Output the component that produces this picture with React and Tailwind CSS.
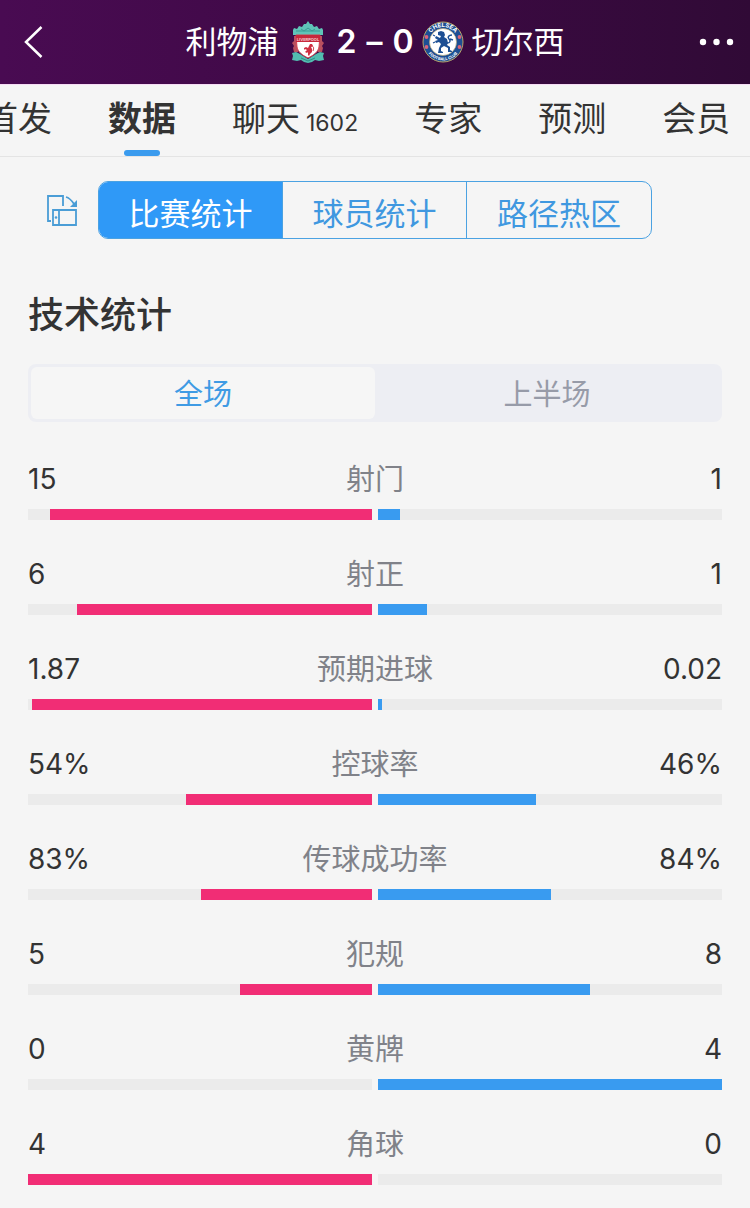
import React, { useState } from 'react'

const tabs = [
  { name: '首发' },
  { name: '数据' },
  { name: '聊天', count: 1602 },
  { name: '专家' },
  { name: '预测' },
  { name: '会员' },
]

const views = ['比赛统计', '球员统计', '路径热区']

const periods = ['全场', '上半场']

const stats = [
  { label: '射门', home: '15', away: '1' },
  { label: '射正', home: '6', away: '1' },
  { label: '预期进球', home: '1.87', away: '0.02' },
  { label: '控球率', home: '54%', away: '46%' },
  { label: '传球成功率', home: '83%', away: '84%' },
  { label: '犯规', home: '5', away: '8' },
  { label: '黄牌', home: '0', away: '4' },
  { label: '角球', home: '4', away: '0' },
]

function LiverpoolBadge() {
  return (
    <svg className="h-[42px] w-8" viewBox="0 0 32 42" role="img" aria-label="Liverpool">
      {/* gates */}
      <path d="M1 14V9l1-2 3 1 2-3 3 1 2-3 2 0 2-3 2 3 2 0 2 3 3-1 2 3 3-1 1 2v5z" fill="#5fc4b8" />
      <path d="M4 10h24M9 8l3 2 4-3 4 3 3-2" fill="none" stroke="#3b9d95" strokeWidth="1" />
      {/* flames */}
      <path d="M2 15h4v16H2l-1-4 1-2-2-3 2-2zM30 15h-4v16h4l1-4-1-2 2-3-2-2z" fill="#b9505f" />
      <path d="M0 32l4-1 4 2 8 5 8-5 4-2 4 1-1 3 1 4-5 1-4-1-3 2-4 1-4-1-3-2-4 1-5-1 1-4z" fill="#52bcb0" />
      <path d="M9 37l7 3 7-3" fill="none" stroke="#2f8d87" strokeWidth="1" />
      {/* shield */}
      <path d="M4 14h24l-1 12c-1 5-5 8-11 11C10 34 6 31 5 26z" fill="#fff" stroke="#d7414f" strokeWidth="1" />
      <path d="M4 14h24v7H4z" fill="#c8283c" />
      <text x="16" y="20" fill="#f3c9cd" fontSize="4" fontWeight="700" fontFamily="Inter, sans-serif" textAnchor="middle">
        LIVERPOOL
      </text>
      <path d="M18 23l2 0 1 2-2 1 1 2 0 3-2 2-1 2-1-1 0-3-1 1-2-1 2-2-2-1-1 1 0-2 2-1 2 1 1-2z" fill="#cf2f42" />
      <path d="M19 25c3 0 3 2 2 5" fill="none" stroke="#cf2f42" strokeWidth="1" />
    </svg>
  )
}

function ChelseaBadge() {
  return (
    <svg className="size-[42px]" viewBox="0 0 42 42" role="img" aria-label="Chelsea">
      <circle cx="21" cy="21" r="20" fill="#1d4f94" stroke="#b9a46a" strokeWidth="1" />
      <circle cx="21" cy="21" r="13.5" fill="#fff" stroke="#b9a46a" strokeWidth="0.6" />
      <path id="chelsea-top" d="M6 21a15 15 0 0 1 30 0" fill="none" />
      <path id="chelsea-bottom" d="M2.5 21a18.5 18.5 0 0 0 37 0" fill="none" />
      <text fill="#fff" fontSize="6" fontWeight="700" fontFamily="Inter, sans-serif" textAnchor="middle">
        <textPath href="#chelsea-top" startOffset="50%">CHELSEA</textPath>
      </text>
      <text fill="#fff" fontSize="4" fontWeight="700" fontFamily="Inter, sans-serif" textAnchor="middle">
        <textPath href="#chelsea-bottom" startOffset="50%">FOOTBALL CLUB</textPath>
      </text>
      <g fill="#d9657b">
        <circle cx="4.5" cy="16" r="1.9" />
        <circle cx="4.5" cy="26" r="1.9" />
        <circle cx="37.5" cy="16" r="1.9" />
        <circle cx="37.5" cy="26" r="1.9" />
      </g>
      {/* lion */}
      <path
        d="M16 11l3-1 3 1 1 3-1 2 3 2 1 4-1 2 3 2 0 3 2 1v1h-4l0-4-4-2-3 2 0 3 2 1v1h-5l1-5 2-4-2-2-3 1-1-2 3-1-3-2 1-2 4 2 1-2-3-1z"
        fill="#1d4f94"
      />
      <path d="M25 22c3 0 4-2 2-4s0-4 3-4M28 18l3 1" fill="none" stroke="#1d4f94" strokeWidth="1.5" />
      <path d="M13 15l-2-1M13 21l-2 1" stroke="#1d4f94" strokeWidth="1.2" />
    </svg>
  )
}

function RotateIcon() {
  return (
    <svg className="h-8 w-8" viewBox="0 0 32 32" fill="none" stroke="#4a9dd6" strokeWidth="1.8" aria-hidden="true">
      <path d="M5 27H2V2h15v10" />
      <path d="M7 16h23v15H7z" />
      <path d="M13 16v15" />
      <path d="M20 3c4 1 6 4 8 7" />
      <path d="M31 6v7h-7z" fill="#4a9dd6" stroke="none" />
      <circle cx="10" cy="23.5" r="1.3" fill="#4a9dd6" stroke="none" />
    </svg>
  )
}

function Header() {
  return (
    <header className="flex h-[85px] items-center border-b border-[#f6dcf5] bg-gradient-to-r from-[#490b52] via-[#3e0945] to-[#300a36] px-4 text-white">
      <div className="flex-1">
        <button type="button" aria-label="返回" className="ml-2 block">
          <svg className="h-8 w-5" viewBox="0 0 20 32" fill="none" stroke="currentColor" strokeWidth="2.5">
            <path d="M17.5 1L2 16l15.500 15" />
          </svg>
        </button>
      </div>
      <h1 className="flex items-center text-[31px] leading-10">
        <span className="pb-1">利物浦</span>
        <span className="ml-3.5"><LiverpoolBadge /></span>
        <span className="ml-3 mr-2 flex gap-2.5 font-['Inter'] text-[32px] font-semibold">
          <span>2</span>
          <span>–</span>
          <span>0</span>
        </span>
        <span className="mr-2"><ChelseaBadge /></span>
        <span className="pb-1">切尔西</span>
      </h1>
      <div className="flex flex-1 justify-end">
        <button type="button" aria-label="更多">
          <svg className="h-8 w-9" viewBox="0 0 36 32" fill="currentColor">
            <circle cx="5" cy="16" r="3.2" />
            <circle cx="18.5" cy="16" r="3.2" />
            <circle cx="32" cy="16" r="3.2" />
          </svg>
        </button>
      </div>
    </header>
  )
}

function StatRow({ label, home, away }) {
  const h = parseFloat(home)
  const a = parseFloat(away)
  const share = (h / (h + a)) * 100

  return (
    <li>
      <div className="grid grid-cols-3 items-start text-[#333]">
        <span className="font-['Inter'] text-[28px] leading-10">{home}</span>
        <span className="text-center text-[29px] leading-9 text-[#808289]">{label}</span>
        <span className="text-right font-['Inter'] text-[28px] leading-10">{away}</span>
      </div>
      <div className="mt-2.5 grid grid-cols-2 gap-1.5">
        <div className="flex h-[11px] justify-end bg-[#ebebeb]">
          <div className="bg-[#f12d75]" style={{ width: `${share}%` }} />
        </div>
        <div className="h-[11px] bg-[#ebebeb]">
          <div className="h-full bg-[#399bf0]" style={{ width: `${100 - share}%` }} />
        </div>
      </div>
    </li>
  )
}

export default function App() {
  const [tab, setTab] = useState('数据')
  const [view, setView] = useState('比赛统计')
  const [period, setPeriod] = useState('全场')

  return (
    <div className="min-h-screen bg-[#f5f5f5] font-['Noto_Sans_CJK_SC',sans-serif] text-[#333]">
      <Header />

      <nav className="flex h-[72px] gap-14 overflow-hidden border-b border-[#e4e4e4]">
        {tabs.map(t => (
          <button
            key={t.name}
            type="button"
            onClick={() => setTab(t.name)}
            className="flex shrink-0 flex-col items-center whitespace-nowrap pt-2.5 text-[34px] leading-[44px] first:-ml-4"
          >
            <span className={t.name === tab ? 'font-bold' : ''}>
              {t.name}
              {t.count && <span className="ml-1.5 font-['Inter'] text-[23px]">{t.count}</span>}
            </span>
            {t.name === tab && <span className="mt-[11px] h-1.5 w-9 rounded-full bg-[#3a9bee]" />}
          </button>
        ))}
      </nav>

      <div className="mt-6 flex items-center pl-[46px] pr-[98px]">
        <button type="button" aria-label="横屏" className="mr-5 shrink-0">
          <RotateIcon />
        </button>
        <div className="grid h-[58px] flex-1 grid-cols-3 divide-x divide-[#4ba2e2] overflow-hidden rounded-[10px] border border-[#4ba2e2] text-[31px] leading-10">
          {views.map(v => (
            <button
              key={v}
              type="button"
              onClick={() => setView(v)}
              className={`pt-1 ${v === view ? 'bg-[#2f99f7] text-white' : 'text-[#4098e0]'}`}
            >
              {v}
            </button>
          ))}
        </div>
      </div>

      <main className="px-7 pb-5">
        <h2 className="mt-12 text-[36px] font-medium leading-[50px]">技术统计</h2>

        <div className="mt-[27px] grid grid-cols-2 rounded-lg bg-[#edeef3] p-[3px] text-[29px] leading-[50px]">
          {periods.map(p => (
            <button
              key={p}
              type="button"
              onClick={() => setPeriod(p)}
              className={`rounded-md pb-0.5 ${p === period ? 'bg-[#f6f6f6] text-[#3f9be4]' : 'text-[#979ba8]'}`}
            >
              {p}
            </button>
          ))}
        </div>

        <ul className="mt-[37px] space-y-[34px]">
          {stats.map(s => (
            <StatRow key={s.label} {...s} />
          ))}
        </ul>
      </main>
    </div>
  )
}
